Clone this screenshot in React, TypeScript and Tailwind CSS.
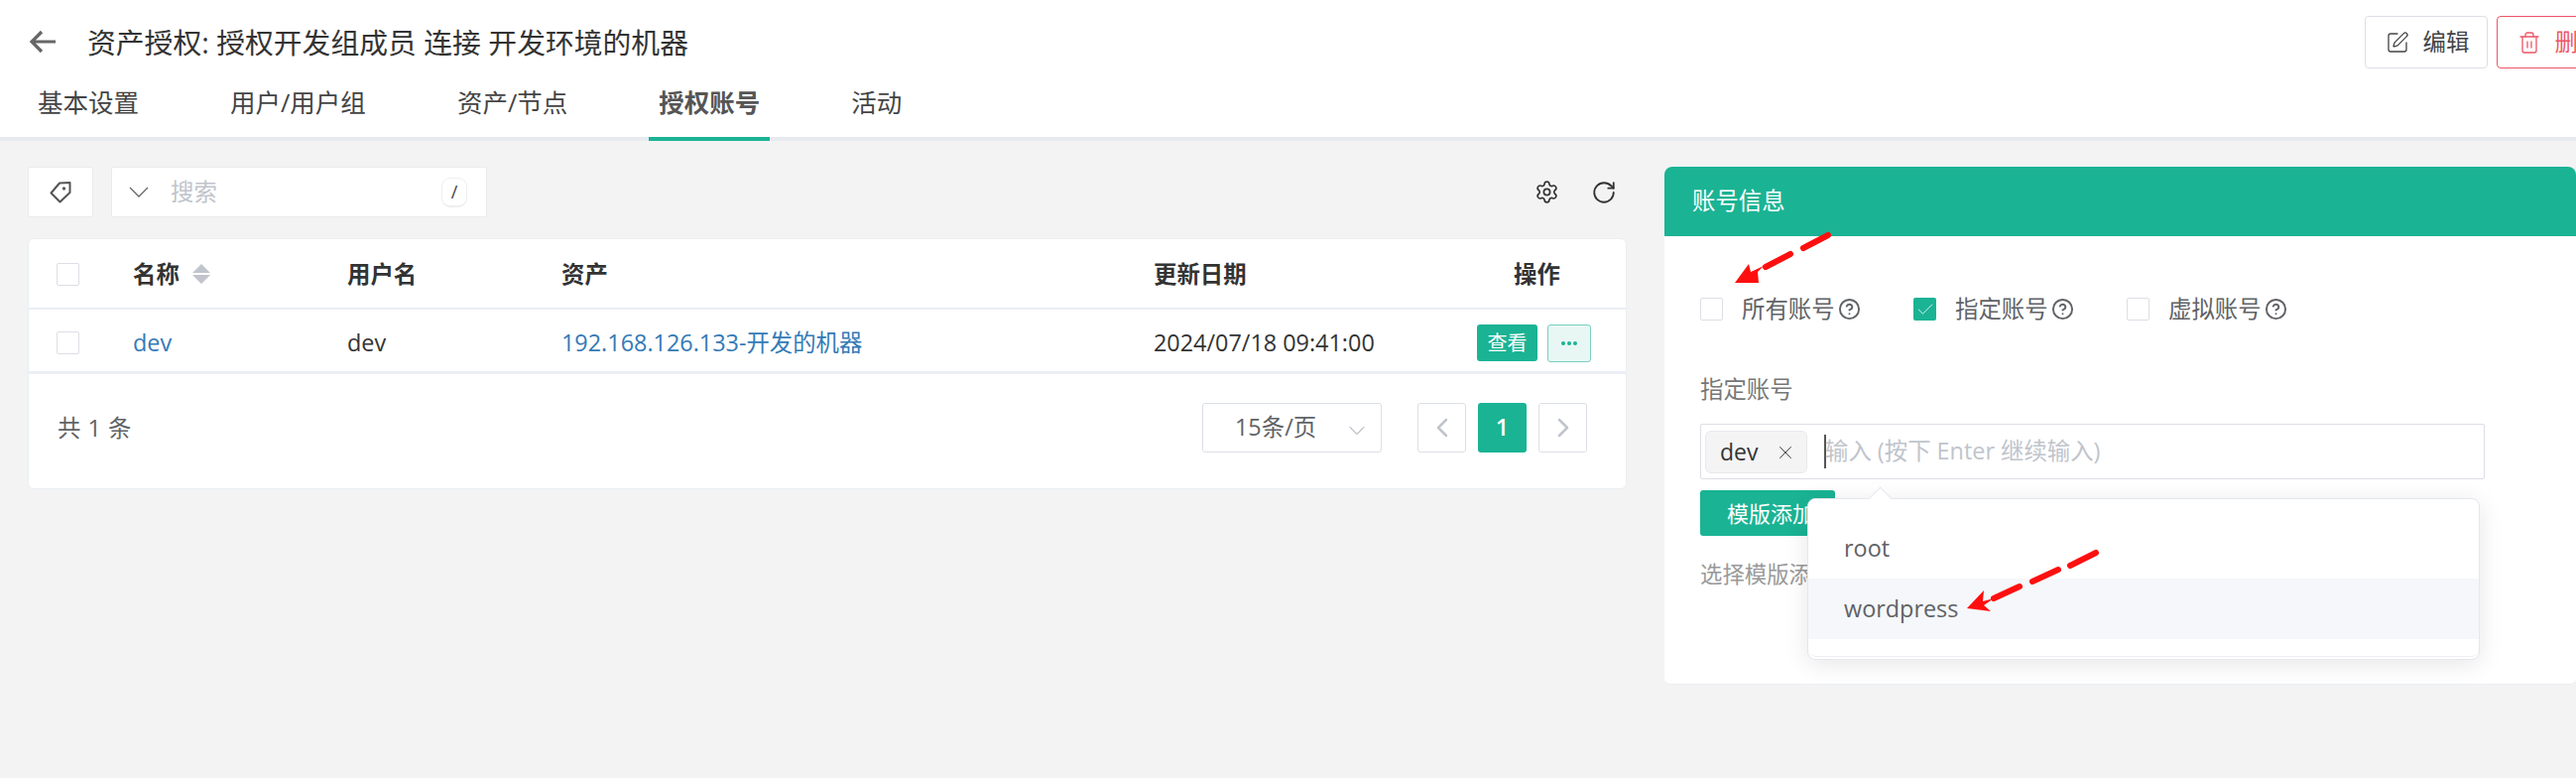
import React from "react";
import { ChevronDown, ChevronLeft, ChevronRight, CircleHelp, RotateCw, Settings, SquarePen, Trash2, X, Check } from "lucide-react";

const FONT = "font-['Open_Sans','Noto_Sans_CJK_SC',sans-serif]";

function Box({ checked }: { checked?: boolean }) {
  return checked ? (
    <span className="flex h-[23px] w-[23px] shrink-0 items-center justify-center rounded-[2px] bg-[#1ab394]">
      <Check size={20} strokeWidth={1} className="text-white" />
    </span>
  ) : (
    <span className="block h-[23px] w-[23px] shrink-0 rounded-[2px] border border-[#dcdfe6] bg-white" />
  );
}

function Radio({ label, checked, className }: { label: string; checked?: boolean; className: string }) {
  return (
    <div className={`flex items-center ${className}`}>
      <Box checked={checked} />
      <span className="ml-[19px] text-[23.4px] leading-none text-[#606266]">{label}</span>
      <CircleHelp size={23} strokeWidth={2} className="ml-[3px] text-[#606266]" />
    </div>
  );
}

function Tab({ label, active }: { label: string; active?: boolean }) {
  return (
    <div
      className={`-mb-[4px] flex h-[73px] items-center border-b-4 px-[10px] text-[25.5px] ${
        active ? "border-[#1ab394] font-bold text-[#555]" : "border-transparent text-[#444]"
      }`}
    >
      {label}
    </div>
  );
}

function PageBtn({ children }: { children: React.ReactNode }) {
  return (
    <span className="flex h-[50px] w-[49px] items-center justify-center rounded-[3px] border border-[#dcdfe6] bg-white text-[#c0c4cc]">
      {children}
    </span>
  );
}

export default function App() {
  return (
    <div className={`relative flex h-[784px] w-full flex-col overflow-hidden bg-[#f3f3f4] ${FONT}`}>
      <header className="shrink-0 border-b-4 border-[#e7eaef] bg-white">
        <div className="flex items-start pt-[16px]">
          <svg width="32" height="26" viewBox="0 0 32 26" className="ml-[29px] mt-[13px] shrink-0 text-[#666]" fill="none" stroke="currentColor" strokeWidth="3.2">
            <path d="M27 13H4M13 3L3 13l10 10" />
          </svg>
          <h1 className="ml-[27px] flex-1 text-[28.8px] leading-[53px] font-normal text-[#333]">
            资产授权: 授权开发组成员 连接 开发环境的机器
          </h1>
          <div className="-mr-[44px] flex shrink-0 gap-[9px]">
            <button className="flex h-[53px] w-[124px] items-center justify-center gap-[14px] rounded-[4px] border border-[#dcdfe6] bg-white pl-[2px] text-[23.4px] text-[#444]">
              <SquarePen size={24} strokeWidth={1.3} />
              编辑
            </button>
            <button className="flex h-[53px] w-[124px] items-center justify-center gap-[14px] rounded-[4px] border border-[#ed5565] bg-white pl-[2px] text-[23.4px] text-[#ed5565]">
              <Trash2 size={24} strokeWidth={1.3} />
              删除
            </button>
          </div>
        </div>
        <nav className="ml-[28px] flex gap-[72px]">
          <Tab label="基本设置" />
          <Tab label="用户/用户组" />
          <Tab label="资产/节点" />
          <Tab label="授权账号" active />
          <Tab label="活动" />
        </nav>
      </header>

      <main className="flex flex-1 gap-[38px] pl-[28px] pt-[26px]">
        <section className="w-[1612px] shrink-0">
          <div className="flex h-[51px] items-center">
            <span className="flex h-[51px] w-[66px] items-center justify-center rounded-[2px] border border-[#ebebeb] bg-white">
              <svg width="22" height="22" viewBox="0 0 22 22" fill="none" stroke="#555" strokeWidth="2" strokeLinejoin="round">
                <path d="M10 1.5L20.5 1v10L10.5 20.5 1.5 11.5z" />
                <circle cx="14.5" cy="7" r="0.7" />
              </svg>
            </span>
            <div className="ml-[18px] flex h-[51px] w-[379px] items-center rounded-[2px] border border-[#ebebeb] bg-white">
              <svg width="20" height="11" viewBox="0 0 20 11" fill="none" stroke="#666" strokeWidth="1.3" className="ml-[17px] shrink-0">
                <path d="M1 1l9 9 9-9" />
              </svg>
              <span className="ml-[22px] flex-1 text-[23.4px] text-[#c0c4cc]">搜索</span>
              <span className="mr-[19px] flex h-[30px] w-[26px] items-center justify-center rounded-[9px] border border-b-2 border-[#eee] text-[18px] text-[#444]">/</span>
            </div>
            <Settings size={25} strokeWidth={1.6} className="ml-auto text-[#333]" />
            <RotateCw size={26} strokeWidth={1.7} className="ml-[32px] mr-[10px] text-[#333]" />
          </div>

          <div className="mt-[21px] h-[253px] rounded-[6px] border border-[#ebeef2] bg-white">
            <div className="grid h-[71px] grid-cols-[105px_216px_216px_597px_1fr] items-center border-b-2 border-[#ebeef5] pt-[2px] text-[23.4px] font-bold text-[#333]">
              <span className="pl-[28px]"><Box /></span>
              <span className="flex items-center gap-[12px]">
                名称
                <svg width="20" height="24" viewBox="0 0 20 24" fill="#c0c4cc"><path d="M10 2l9 9H1zM10 22l-9-9h18z" /></svg>
              </span>
              <span>用户名</span>
              <span>资产</span>
              <div className="flex items-center">
                <span className="w-[326px]">更新日期</span>
                <span className="pl-[37px]">操作</span>
              </div>
            </div>
            <div className="grid h-[65px] grid-cols-[105px_216px_216px_597px_1fr] items-center border-b-[3px] border-[#ebeef5] pt-[5px] text-[23.4px] text-[#333]">
              <span className="pl-[28px]"><Box /></span>
              <span className="text-[#337ab7]">dev</span>
              <span>dev</span>
              <span className="whitespace-nowrap text-[#337ab7]">192.168.126.133-开发的机器</span>
              <div className="flex items-center">
                <span className="w-[326px] whitespace-nowrap">2024/07/18 09:41:00</span>
                <span className="flex h-[37px] w-[61px] items-center justify-center rounded-[3px] bg-[#1ab394] text-[20px] text-white">查看</span>
                <span className="ml-[10px] flex h-[38px] w-[44px] items-center justify-center rounded-[3px] border border-[#76d1bf] bg-[#e8f7f4]">
                  <svg width="18" height="6" viewBox="0 0 18 6" fill="#1ab394"><circle cx="3" cy="3" r="2" /><circle cx="9" cy="3" r="2" /><circle cx="15" cy="3" r="2" /></svg>
                </span>
              </div>
            </div>
            <div className="flex h-[112px] items-start pl-[29px] pt-[29px]">
              <span className="text-[23.4px] leading-[50px] tracking-[0.5px] text-[#606266]">共 1 条</span>
              <div className="ml-auto mr-[39px] flex items-center">
                <span className="flex h-[50px] w-[181px] items-center rounded-[3px] border border-[#dcdfe6] pl-[32px] text-[23.4px] text-[#606266]">
                  <span className="flex-1 whitespace-nowrap">15条/页</span>
                  <ChevronDown size={28} strokeWidth={1} className="mr-[10px] mt-[6px] shrink-0 text-[#c0c4cc]" />
                </span>
                <span className="ml-[36px]"><PageBtn><ChevronLeft size={32} strokeWidth={1.9} /></PageBtn></span>
                <span className="ml-[12px] flex h-[50px] w-[49px] items-center justify-center rounded-[3px] bg-[#1ab394] text-[23.4px] font-semibold text-white">1</span>
                <span className="ml-[12px]"><PageBtn><ChevronRight size={32} strokeWidth={1.9} /></PageBtn></span>
              </div>
            </div>
          </div>
        </section>

        <section className="h-[522px] min-w-0 flex-1 rounded-t-[8px] rounded-b-[6px] border-b border-[#ebeef2] bg-white">
          <div className="flex h-[70px] items-center rounded-t-[8px] bg-[#1ab394] pl-[28px] text-[23.4px] text-white">账号信息</div>
          <div className="pl-[36px]">
            <div className="flex h-[85px] items-end">
              <div className="flex h-[23px] items-center">
                <Radio label="所有账号" className="w-[215px]" />
                <Radio label="指定账号" checked className="w-[215px]" />
                <Radio label="虚拟账号" className="" />
              </div>
            </div>
            <div className="mt-[53px] text-[23.4px] leading-[32px] text-[#777]">指定账号</div>
            <div className="mt-[19px] flex h-[56px] w-[791px] items-center rounded-[2px] border border-[#dcdfe6] bg-white pl-[4px]">
              <span className="flex h-[43px] w-[103px] items-center rounded-[6px] border border-[#e9e9eb] bg-[#f4f4f5] pl-[14px] text-[23px] text-[#333]">
                dev
                <X size={22} strokeWidth={1} className="ml-[17px] mt-[2px] text-[#333]" />
              </span>
              <span className="ml-[17px] h-[34px] w-[2px] bg-[#555]" />
              <span className="-ml-[1px] text-[23.4px] text-[#c0c4cc]">输入 (按下 Enter 继续输入)</span>
            </div>
            <button className="mt-[11px] flex h-[46px] w-[136px] items-center justify-start rounded-[3px] bg-[#1ab394] pl-[27px] text-[22px] whitespace-nowrap text-white">模版添加</button>
            <p className="mt-[24px] text-[22.4px] leading-[30px] text-[#999]">选择模版添加</p>
          </div>
        </section>
      </main>

      <div className="absolute left-[1822px] top-[502px] h-[163px] w-[678px] rounded-[8px] border border-[#e4e7ed] bg-white shadow-[0_4px_24px_rgba(0,0,0,0.1)]">
        <span className="absolute -top-[9px] left-[64px] h-[17px] w-[17px] rotate-45 border-l border-t border-[#e4e7ed] bg-white" />
        <div className="relative h-[159px] rounded-b-[8px] border-b border-[#eeeef2] pt-[19px]">
          <div className="flex h-[61px] items-center pl-[36px] text-[23.4px] text-[#606266]">root</div>
          <div className="flex h-[61px] items-center bg-[#f5f7fa] pl-[36px] text-[23.4px] text-[#606266]">wordpress</div>
        </div>
      </div>

      <svg className="pointer-events-none absolute left-0 top-0" width="2597" height="784" viewBox="0 0 2597 784" fill="none">
        <g stroke="#fe0f0f" strokeWidth="6" strokeLinecap="round">
          <path d="M1843 237L1818 250M1805 256L1780 269" />
          <path d="M2113 557L2087 570M2075 574L2049 586M2036 591L2010 603" />
        </g>
        <g fill="#fe0f0f">
          <path d="M1749 285L1763 266L1765 274L1778 268L1772 274L1773 285Z" />
          <path d="M1983 613L2000 595L1999 606L2010 603L2000 610L2007 616Z" />
        </g>
      </svg>
    </div>
  );
}
